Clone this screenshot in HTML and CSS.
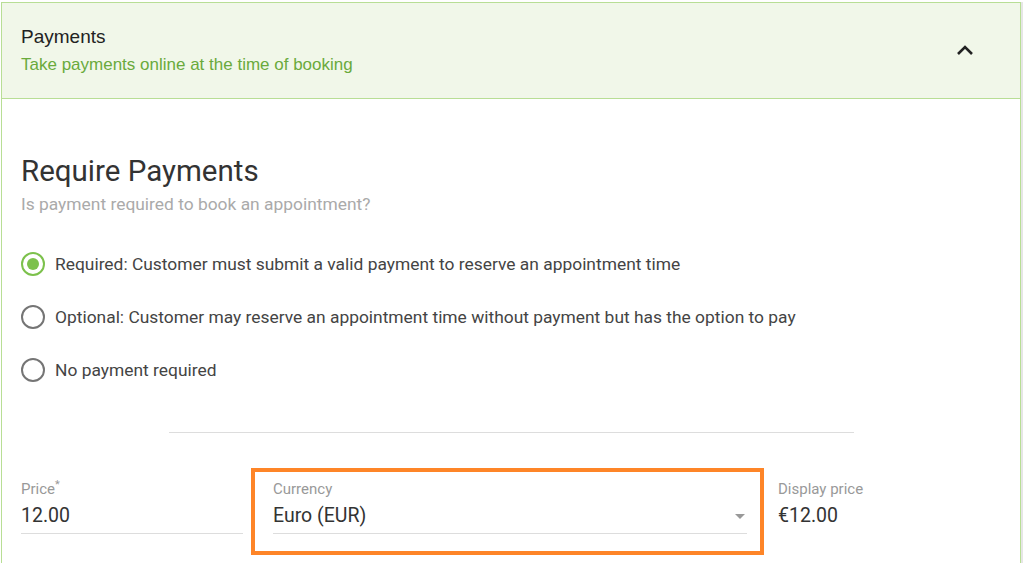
FILE: index.html
```html
<!DOCTYPE html>
<html lang="en">
<head>
<meta charset="utf-8">
<title>Payments</title>
<link rel="stylesheet" href="styles.css">
</head>
<body>
<section class="card">
  <header class="card-header">
    <div class="header-text">
      <h2 class="header-title">Payments</h2>
      <p class="header-sub">Take payments online at the time of booking</p>
    </div>
    <svg class="chevron" width="18" height="12" viewBox="0 0 18 12" aria-hidden="true">
      <path d="M2 10 L9 3 L16 10" fill="none" stroke="#222" stroke-width="2.6"/>
    </svg>
  </header>
  <div class="card-body">
    <h1 class="section-title">Require Payments</h1>
    <p class="section-sub">Is payment required to book an appointment?</p>
    <ul class="radio-list">
      <li class="radio-item"><span class="radio checked"></span><span class="radio-label">Required: Customer must submit a valid payment to reserve an appointment time</span></li>
      <li class="radio-item"><span class="radio"></span><span class="radio-label">Optional: Customer may reserve an appointment time without payment but has the option to pay</span></li>
      <li class="radio-item"><span class="radio"></span><span class="radio-label">No payment required</span></li>
    </ul>
    <hr class="divider">
    <div class="fields">
      <div class="field price-field">
        <label class="field-label">Price<sup class="req">*</sup></label>
        <div class="field-value underline">12.00</div>
      </div>
      <div class="highlight">
        <div class="field currency-field">
          <label class="field-label">Currency</label>
          <div class="field-value underline select">
            <span>Euro (EUR)</span>
            <svg class="caret" width="10" height="5" viewBox="0 0 10 5" aria-hidden="true"><path d="M0 0 L10 0 L5 5 Z" fill="#999"/></svg>
          </div>
        </div>
      </div>
      <div class="field display-field">
        <label class="field-label">Display price</label>
        <div class="field-value">€12.00</div>
      </div>
    </div>
  </div>
</section>
</body>
</html>
```

FILE: styles.css
```css
* { box-sizing: border-box; }
html, body { margin: 0; padding: 0; background: #fff; }
body {
  font-family: Roboto, "Liberation Sans", Arial, sans-serif;
  color: #333;
  padding: 2px 0 0 1px;
}
.card {
  width: 1020px;
  height: 561px;
  border: 1px solid #b8de95;
  border-bottom: none;
  box-shadow: 2px 0 0 #e6e6e6;
  background: #fff;
}
.card-header {
  height: 96px;
  background: #f1f7e9;
  border-bottom: 1px solid #b8de95;
  display: flex;
  align-items: center;
  justify-content: space-between;
  padding: 0 46px 2px 19px;
}
.header-text { font-family: "Liberation Sans", Arial, sans-serif; }
.header-title {
  margin: 0;
  font-size: 19px;
  font-weight: normal;
  color: #222;
  line-height: 26px;
}
.header-sub {
  margin: 4px 0 0;
  font-size: 17px;
  color: #6aaa3c;
  line-height: 22px;
}
.chevron { margin-top: 0; }
.card-body {
  padding: 54px 19px 0 19px;
}
.section-title {
  margin: 0;
  font-size: 29.5px;
  font-weight: normal;
  color: #333;
  line-height: 36px;
}
.section-sub {
  margin: 4px 0 0;
  font-size: 17.4px;
  color: #aaa;
  line-height: 22px;
}
.radio-list {
  list-style: none;
  margin: 37px 0 0;
  padding: 0;
  display: flex;
  flex-direction: column;
  gap: 29px;
}
.radio-item {
  display: flex;
  align-items: center;
  gap: 10px;
  height: 24px;
}
.radio {
  width: 24px;
  height: 24px;
  border: 2px solid #757575;
  border-radius: 50%;
  flex: none;
  position: relative;
}
.radio.checked { border-color: #7cc14c; }
.radio.checked::after {
  content: "";
  position: absolute;
  left: 4px; top: 4px;
  width: 12px; height: 12px;
  border-radius: 50%;
  background: #7cc14c;
}
.radio-label {
  font-size: 17.4px;
  color: #444;
}
.divider {
  width: 685px;
  margin: 50px auto 0;
  border: none;
  border-top: 1px solid #ddd;
}
.fields {
  display: flex;
  align-items: flex-start;
  margin-top: 35px;
}
.field-label {
  display: block;
  font-size: 15px;
  color: #999;
  line-height: 18px;
}
.req { font-size: 11px; vertical-align: top; line-height: 10px; }
.field-value {
  font-size: 19.5px;
  color: #333;
  line-height: 24px;
  margin-top: 6px;
  padding-bottom: 5px;
}
.underline { border-bottom: 1px solid #ddd; }
.price-field { width: 222px; padding-top: 12px; }
.highlight {
  margin-left: 8px;
  width: 513px;
  height: 87px;
  border: 4px solid #fe8528;
  padding: 8px 13px 0 18px;
}
.select { display: flex; align-items: center; justify-content: space-between; }
.caret { margin-right: 2px; }
.display-field { margin-left: 14px; padding-top: 12px; }
```
